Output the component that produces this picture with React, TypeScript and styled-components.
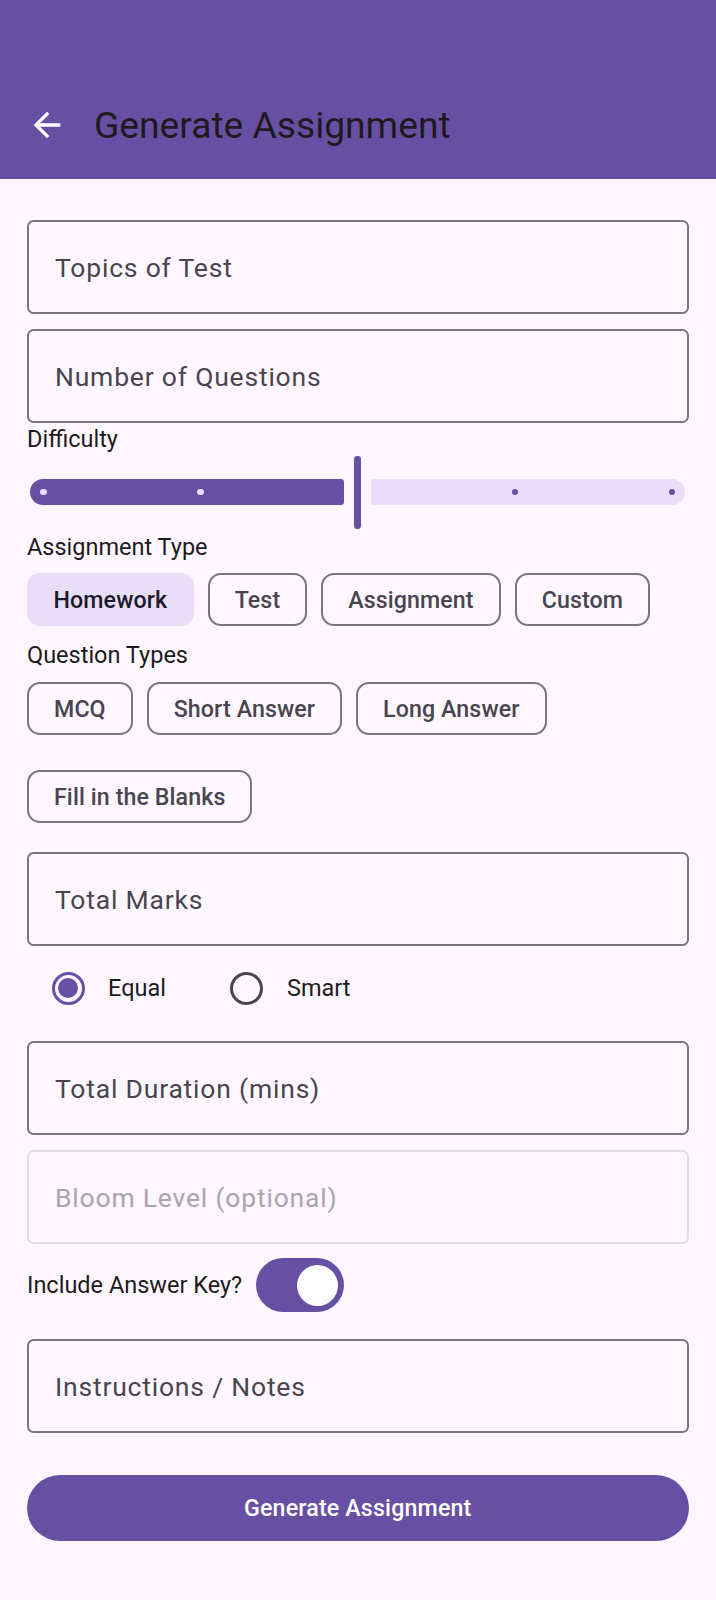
import React from "react";
import styled, { createGlobalStyle } from "styled-components";

const C = {
  primary: "#6750a4",
  surface: "#fef7ff",
  onSurface: "#1d1b20",
  onSurfaceVariant: "#49454f",
  outline: "#79747e",
  secondaryContainer: "#e8def8",
  onSecondaryContainer: "#1d192b",
  disabledText: "#aaa5ad",
  disabledBorder: "#e2dce5",
};

const GlobalStyle = createGlobalStyle`
  html, body { margin: 0; padding: 0; background: ${C.surface}; }
  body { font-family: Roboto, "Noto Sans", sans-serif; -webkit-font-smoothing: antialiased; }
  * { box-sizing: border-box; }
  button { font-family: inherit; }
`;

const Screen = styled.div`
  width: 716px;
  min-height: 1600px;
  background: ${C.surface};
  display: flex;
  flex-direction: column;
`;

const TopBar = styled.header`
  height: 179px;
  background: ${C.primary};
  display: flex;
  align-items: center;
  padding: 70px 0 0 27px;
`;

const BackButton = styled.button`
  width: 40px;
  height: 40px;
  padding: 0;
  border: 0;
  background: none;
  display: flex;
  align-items: center;
  justify-content: center;
  color: #ffffff;
`;

const Title = styled.h1`
  margin: 0 0 0 27px;
  font-size: 37.2px;
  font-weight: 400;
  line-height: 44px;
  color: ${C.onSurface};
`;

const Form = styled.main`
  display: flex;
  flex-direction: column;
  padding: 0 27.5px 0 27px;
`;

const Field = styled.div<{ $mt: number; $disabled?: boolean }>`
  margin-top: ${(p) => p.$mt}px;
  height: 94px;
  border: 2px solid ${(p) => (p.$disabled ? C.disabledBorder : C.outline)};
  border-radius: 6.6px;
  display: flex;
  align-items: center;
  padding-left: 26px;
  font-size: 26.5px;
  letter-spacing: 0.8px;
  color: ${(p) => (p.$disabled ? C.disabledText : C.onSurfaceVariant)};
`;

const SectionLabel = styled.div<{ $mt?: number }>`
  margin-top: ${(p) => p.$mt ?? 0}px;
  font-size: 23.5px;
  line-height: 32px;
  color: ${C.onSurface};
`;

const SliderRoot = styled.div`
  position: relative;
  height: 74px;
  display: flex;
  align-items: center;
  padding: 0 3.3px;
`;

const ActiveTrack = styled.div`
  flex: none;
  height: 26.5px;
  background: ${C.primary};
  border-radius: 13.25px 3.3px 3.3px 13.25px;
`;

const Thumb = styled.div`
  flex: none;
  width: 6.6px;
  height: 73px;
  margin: 0 10px;
  border-radius: 3.3px;
  background: ${C.primary};
`;

const InactiveTrack = styled.div`
  flex: 1;
  height: 26.5px;
  background: ${C.secondaryContainer};
  border-radius: 3.3px 13.25px 13.25px 3.3px;
`;

const TickLayer = styled.div`
  position: absolute;
  top: 0;
  bottom: 0;
  left: 3.3px;
  right: 3.3px;
  pointer-events: none;
`;

const Tick = styled.span<{ $onActive: boolean }>`
  position: absolute;
  top: 50%;
  width: 6.6px;
  height: 6.6px;
  margin: -3.3px 0 0 -3.3px;
  border-radius: 50%;
  background: ${(p) => (p.$onActive ? C.secondaryContainer : C.primary)};
`;

const ChipGroup = styled.div<{ $mt: number }>`
  margin-top: ${(p) => p.$mt}px;
  display: flex;
  flex-wrap: wrap;
  column-gap: 14px;
  row-gap: 35px;
`;

const Chip = styled.button<{ $selected?: boolean }>`
  height: 53px;
  padding: 0 ${(p) => (p.$selected ? 26.5 : 25)}px;
  border-radius: 13px;
  border: ${(p) => (p.$selected ? "none" : `2px solid ${C.outline}`)};
  background: ${(p) => (p.$selected ? C.secondaryContainer : "transparent")};
  color: ${(p) => (p.$selected ? C.onSecondaryContainer : C.onSurfaceVariant)};
  font-size: 23.2px;
  font-weight: 500;
  letter-spacing: 0.1px;
  display: flex;
  align-items: center;
`;

const RadioGroup = styled.div`
  margin-top: 2px;
  height: 80px;
  display: flex;
  align-items: center;
  padding-left: 1px;
`;

const RadioItem = styled.label<{ $gapAfter?: number }>`
  display: flex;
  align-items: center;
  margin-right: ${(p) => p.$gapAfter ?? 0}px;
  font-size: 23.5px;
  color: ${C.onSurface};
`;

const RadioTarget = styled.span`
  width: 80px;
  height: 80px;
  display: flex;
  align-items: center;
  justify-content: center;
`;

const RadioCircle = styled.span<{ $checked: boolean }>`
  width: 33px;
  height: 33px;
  border-radius: 50%;
  border: 3.3px solid ${(p) => (p.$checked ? C.primary : C.onSurfaceVariant)};
  display: flex;
  align-items: center;
  justify-content: center;
  &::after {
    content: "";
    width: 20px;
    height: 20px;
    border-radius: 50%;
    background: ${C.primary};
    display: ${(p) => (p.$checked ? "block" : "none")};
  }
`;

const SwitchRow = styled.div`
  margin-top: 14px;
  display: flex;
  align-items: center;
  gap: 14px;
  font-size: 23.5px;
  color: ${C.onSurface};
`;

const SwitchTrack = styled.span<{ $on: boolean }>`
  width: 88px;
  height: 54px;
  border-radius: 27px;
  background: ${(p) => (p.$on ? C.primary : C.secondaryContainer)};
  display: flex;
  align-items: center;
  justify-content: ${(p) => (p.$on ? "flex-end" : "flex-start")};
  padding: 0 6.6px;
`;

const SwitchThumb = styled.span`
  width: 41px;
  height: 41px;
  border-radius: 50%;
  background: #ffffff;
`;

const PrimaryButton = styled.button`
  margin-top: 42px;
  height: 66px;
  border: 0;
  border-radius: 33px;
  background: ${C.primary};
  color: #ffffff;
  font-size: 23.2px;
  font-weight: 500;
  letter-spacing: 0.17px;
`;

const ArrowBack = () => (
  <svg width="40" height="40" viewBox="0 0 24 24" fill="currentColor">
    <path d="M20 11H7.83l5.59-5.59L12 4l-8 8 8 8 1.41-1.41L7.83 13H20v-2z" />
  </svg>
);

const DifficultySlider = ({ steps, value }: { steps: number; value: number }) => {
  const contentWidth = 716 - 27 - 27.5;
  const trackWidth = contentWidth - 6.6;
  const inset = 13.25;
  const usable = trackWidth - inset * 2;
  const frac = value / (steps - 1);
  const thumbX = inset + frac * usable;
  const activeWidth = thumbX - 3.3 - 10;
  const ticks = Array.from({ length: steps }, (_, i) => i).filter((i) => i !== value);
  return (
    <SliderRoot>
      <ActiveTrack style={{ width: activeWidth }} />
      <Thumb />
      <InactiveTrack />
      <TickLayer>
        {ticks.map((i) => (
          <Tick key={i} $onActive={i < value} style={{ left: inset + (i / (steps - 1)) * usable }} />
        ))}
      </TickLayer>
    </SliderRoot>
  );
};

export default function App() {
  const assignmentTypes = ["Homework", "Test", "Assignment", "Custom"];
  const questionTypes = ["MCQ", "Short Answer", "Long Answer", "Fill in the Blanks"];
  return (
    <Screen>
      <GlobalStyle />
      <TopBar>
        <BackButton aria-label="Back">
          <ArrowBack />
        </BackButton>
        <Title>Generate Assignment</Title>
      </TopBar>
      <Form>
        <Field $mt={41}>Topics of Test</Field>
        <Field $mt={15}>Number of Questions</Field>
        <SectionLabel>Difficulty</SectionLabel>
        <DifficultySlider steps={5} value={2} />
        <SectionLabel $mt={2}>Assignment Type</SectionLabel>
        <ChipGroup $mt={10}>
          {assignmentTypes.map((t, i) => (
            <Chip key={t} $selected={i === 0}>
              {t}
            </Chip>
          ))}
        </ChipGroup>
        <SectionLabel $mt={13}>Question Types</SectionLabel>
        <ChipGroup $mt={11}>
          {questionTypes.map((t) => (
            <Chip key={t}>{t}</Chip>
          ))}
        </ChipGroup>
        <Field $mt={29}>Total Marks</Field>
        <RadioGroup>
          <RadioItem $gapAfter={41}>
            <RadioTarget>
              <RadioCircle $checked />
            </RadioTarget>
            Equal
          </RadioItem>
          <RadioItem>
            <RadioTarget>
              <RadioCircle $checked={false} />
            </RadioTarget>
            Smart
          </RadioItem>
        </RadioGroup>
        <Field $mt={13}>Total Duration (mins)</Field>
        <Field $mt={15} $disabled>
          Bloom Level (optional)
        </Field>
        <SwitchRow>
          Include Answer Key?
          <SwitchTrack $on>
            <SwitchThumb />
          </SwitchTrack>
        </SwitchRow>
        <Field $mt={27}>Instructions / Notes</Field>
        <PrimaryButton>Generate Assignment</PrimaryButton>
      </Form>
    </Screen>
  );
}
